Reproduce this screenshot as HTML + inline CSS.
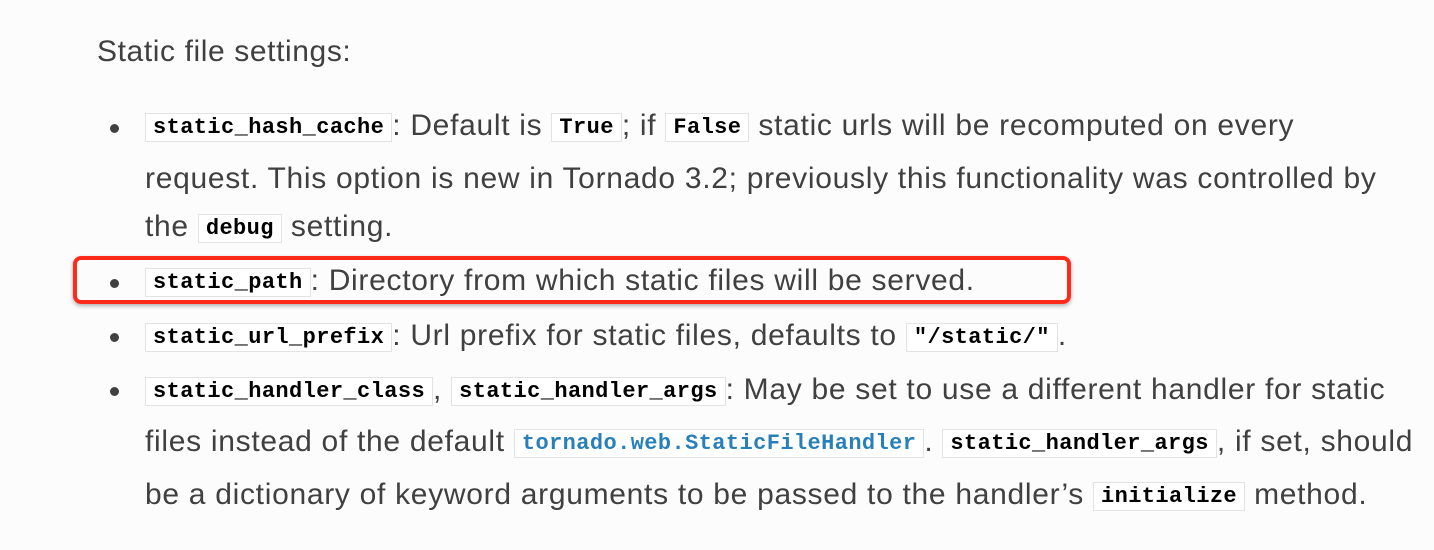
<!DOCTYPE html>
<html><head><style>
body{margin:0;width:1434px;height:550px;background:#fcfcfc;overflow:hidden;font-family:"Liberation Sans",sans-serif;color:#404040;position:relative}
.l{position:absolute;left:145px;font-size:30px;letter-spacing:0.7px;white-space:nowrap;line-height:40px}
.h{position:absolute;left:97px;top:32px;font-size:30px;letter-spacing:0.6px;line-height:40px}
code{font-family:"Liberation Mono",monospace;font-weight:bold;font-size:22px;letter-spacing:0.4px;color:#000;background:#fff;border:1px solid #e1e4e5;padding:1px 7px;position:relative;top:-2px}
code.b{color:#2980b9}
.d{position:absolute;left:110px;width:9px;height:9px;border-radius:50%;background:#404040}
.box{position:absolute;left:73px;top:256px;width:990px;height:40px;border:4px solid #ff2a1a;border-radius:8px;box-shadow:0 2px 4px rgba(0,0,0,.3)}
</style></head><body>
<div class="h">Static file settings:</div>
<div class="d" style="top:124px"></div>
<div class="l" style="top:106px"><code>static_hash_cache</code>: Default is <code>True</code>; if <code>False</code> static urls will be recomputed on every</div>
<div class="l" style="top:159px">request. This option is new in Tornado 3.2; previously this functionality was controlled by</div>
<div class="l" style="top:207px">the <code>debug</code> setting.</div>
<div class="d" style="top:279px"></div>
<div class="l" style="top:261px"><code>static_path</code>: Directory from which static files will be served.</div>
<div class="d" style="top:333px"></div>
<div class="l" style="top:316px"><code>static_url_prefix</code>: Url prefix for static files, defaults to <code>"/static/"</code>.</div>
<div class="d" style="top:387px"></div>
<div class="l" style="top:370px"><code>static_handler_class</code>, <code>static_handler_args</code>: May be set to use a different handler for static</div>
<div class="l" style="top:422px">files instead of the default <code class="b">tornado.web.StaticFileHandler</code>. <code>static_handler_args</code>, if set, should</div>
<div class="l" style="top:475px">be a dictionary of keyword arguments to be passed to the handler’s <code>initialize</code> method.</div>
<div class="box"></div>
</body></html>
